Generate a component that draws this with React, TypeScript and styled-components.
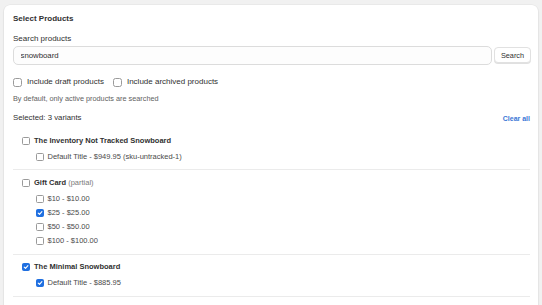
import React from "react";
import { styled, createGlobalStyle } from "styled-components";

interface Variant {
  label: string;
  checked: boolean;
}

interface Product {
  title: string;
  note?: string;
  checked: boolean;
  variants: Variant[];
}

const products: Product[] = [
  {
    title: "The Inventory Not Tracked Snowboard",
    checked: false,
    variants: [{ label: "Default Title - $949.95 (sku-untracked-1)", checked: false }],
  },
  {
    title: "Gift Card",
    note: "(partial)",
    checked: false,
    variants: [
      { label: "$10 - $10.00", checked: false },
      { label: "$25 - $25.00", checked: true },
      { label: "$50 - $50.00", checked: false },
      { label: "$100 - $100.00", checked: false },
    ],
  },
  {
    title: "The Minimal Snowboard",
    checked: true,
    variants: [{ label: "Default Title - $885.95", checked: true }],
  },
  {
    title: "The Videographer Snowboard",
    checked: true,
    variants: [{ label: "Default Title - $885.95", checked: true }],
  },
];

const GlobalStyle = createGlobalStyle`
  html, body {
    margin: 0;
    background: #f1f1f1;
    font-family: "Liberation Sans", Arial, sans-serif;
    color: #303030;
  }
`;

const Page = styled.div`
  height: 305px;
  overflow: hidden;
  padding: 4.5px 4px 0;
  box-sizing: border-box;
`;

const Card = styled.div`
  background: #ffffff;
  border-radius: 6px;
  box-shadow: 0 0 0 0.5px rgba(0, 0, 0, 0.06), 0 1px 2px rgba(0, 0, 0, 0.08);
  padding: 9px 8px 0 9px;
  min-height: 320px;
`;

const Title = styled.h2`
  margin: 0;
  font-size: 8px;
  line-height: 10px;
  font-weight: 700;
`;

const FieldLabel = styled.div`
  margin-top: 10px;
  font-size: 8px;
  line-height: 10px;
`;

const SearchRow = styled.div`
  display: flex;
  align-items: center;
  gap: 2px;
  margin-top: 2px;
`;

const SearchInput = styled.input`
  flex: 1;
  box-sizing: border-box;
  height: 19px;
  margin: 0 0 0 -0.5px;
  padding: 0 7px;
  border: 1px solid #dcdcdc;
  border-radius: 5px;
  font-family: inherit;
  font-size: 7.8px;
  color: #303030;
  background: #fdfdfd;
  outline: none;
`;

const Button = styled.button`
  box-sizing: border-box;
  width: 37px;
  height: 16px;
  margin-right: -1px;
  padding: 0;
  border: 1px solid #e1e1e1;
  border-radius: 4px;
  background: #ffffff;
  box-shadow: 0 1px 0 rgba(0, 0, 0, 0.12);
  font-family: inherit;
  font-size: 7.3px;
  color: #303030;
`;

const OptionRow = styled.div`
  display: flex;
  align-items: center;
  gap: 9px;
  margin-top: 12.5px;
  height: 10px;
`;

const Option = styled.label<{ $gap: number }>`
  display: flex;
  align-items: center;
  gap: ${(p) => p.$gap}px;
  font-size: 8px;
  line-height: 10px;
`;

const Box = styled.span<{ $size: number; $checked: boolean }>`
  display: inline-flex;
  align-items: center;
  justify-content: center;
  flex: none;
  box-sizing: border-box;
  width: ${(p) => p.$size}px;
  height: ${(p) => p.$size}px;
  border-radius: ${(p) => (p.$size > 8 ? 2.5 : 1.5)}px;
  border: 1px solid ${(p) => (p.$checked ? "#1f6fe0" : "#9a9a9a")};
  background: ${(p) => (p.$checked ? "#1f6fe0" : "#ffffff")};
`;

const HelpText = styled.div`
  margin-top: 7px;
  font-size: 7.3px;
  line-height: 10px;
  color: #616161;
`;

const SelectedRow = styled.div`
  display: flex;
  justify-content: space-between;
  align-items: center;
  margin-top: 9px;
  font-size: 7.8px;
  line-height: 10px;
`;

const LinkButton = styled.button`
  border: none;
  background: none;
  padding: 0;
  font-family: inherit;
  font-size: 7px;
  font-weight: 700;
  color: #3a76d6;
`;

const ProductList = styled.div`
  margin-top: 5px;
`;

const Group = styled.div`
  padding: 7.5px 0 7.5px 9px;
  border-bottom: 1px solid #ebebeb;
`;

const ProductTitle = styled.span`
  font-size: 7.5px;
  font-weight: 700;
  color: #303030;
`;

const Note = styled.span`
  font-weight: 400;
  color: #7a7a7a;
`;

const VariantList = styled.div`
  display: flex;
  flex-direction: column;
  gap: 4.33px;
  margin-top: 6px;
  padding-left: 14px;
`;

const VariantLabel = styled.span`
  font-size: 7.5px;
  color: #4a4a4a;
`;

const Check: React.FC<{ size: number; checked: boolean }> = ({ size, checked }) => (
  <Box $size={size} $checked={checked}>
    {checked && (
      <svg width={size - 2} height={size - 2} viewBox="0 0 10 10">
        <path d="M2 5.2 L4.2 7.3 L8.2 2.8" fill="none" stroke="#fff" strokeWidth="1.8" strokeLinecap="round" strokeLinejoin="round" />
      </svg>
    )}
  </Box>
);

const ProductGroup: React.FC<{ product: Product }> = ({ product }) => (
  <Group>
    <Option $gap={4}>
      <Check size={8} checked={product.checked} />
      <ProductTitle>
        {product.title}
        {product.note && <Note> {product.note}</Note>}
      </ProductTitle>
    </Option>
    <VariantList>
      {product.variants.map((variant, index) => (
        <Option key={index} $gap={3.5}>
          <Check size={8} checked={variant.checked} />
          <VariantLabel>{variant.label}</VariantLabel>
        </Option>
      ))}
    </VariantList>
  </Group>
);

export default function App() {
  return (
    <>
      <GlobalStyle />
      <Page>
        <Card>
          <Title>Select Products</Title>
          <FieldLabel>Search products</FieldLabel>
          <SearchRow>
            <SearchInput defaultValue="snowboard" />
            <Button>Search</Button>
          </SearchRow>
          <OptionRow>
            <Option $gap={5}>
              <Check size={9} checked={false} />
              Include draft products
            </Option>
            <Option $gap={5}>
              <Check size={9} checked={false} />
              Include archived products
            </Option>
          </OptionRow>
          <HelpText>By default, only active products are searched</HelpText>
          <SelectedRow>
            <span>Selected: 3 variants</span>
            <LinkButton>Clear all</LinkButton>
          </SelectedRow>
          <ProductList>
            {products.map((product, index) => (
              <ProductGroup key={index} product={product} />
            ))}
          </ProductList>
        </Card>
      </Page>
    </>
  );
}
